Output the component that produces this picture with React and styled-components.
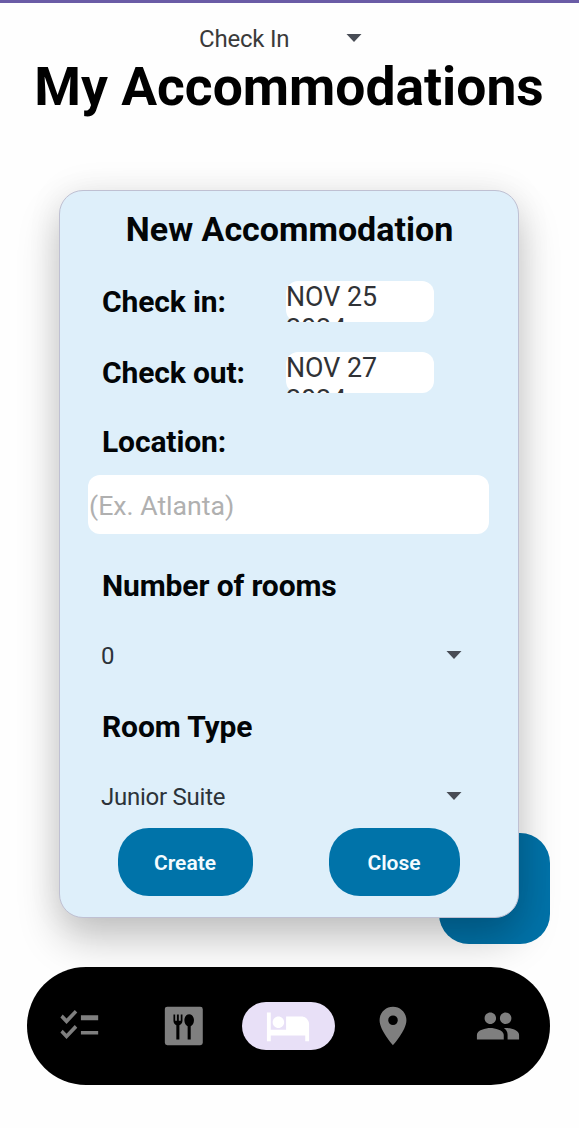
import React from "react";
import styled, { createGlobalStyle } from "styled-components";

const Global = createGlobalStyle`
  * { box-sizing: border-box; }
  body { margin: 0; background: #fefefe; font-family: Roboto, "Liberation Sans", sans-serif; }
`;

const Screen = styled.main`
  position: relative;
  display: flex;
  flex-direction: column;
  width: 579px;
  height: 1128px;
  overflow: hidden;
  border-top: 3px solid #6a5ca6;
`;

const SortSelect = styled.button`
  display: flex;
  align-items: center;
  justify-content: space-between;
  width: 163px;
  height: 28px;
  margin: 22px 0 0 199px;
  padding: 0;
  border: 0;
  background: none;
  font: 400 24px/28px Roboto, sans-serif;
  letter-spacing: -0.2px;
  color: #3a3a3a;
`;

const PageTitle = styled.h1`
  margin: 4px 0 0 -1px;
  font-size: 53.4px;
  font-weight: 700;
  line-height: 60px;
  text-align: center;
  white-space: nowrap;
  color: #000;
`;

const AddButton = styled.button`
  position: absolute;
  left: 439px;
  top: 830px;
  width: 111px;
  height: 111px;
  border: 0;
  border-radius: 30px;
  background: #0072a8;
`;

const Card = styled.section`
  position: relative;
  display: flex;
  flex-direction: column;
  width: 460px;
  height: 728px;
  margin: 73px 0 0 59px;
  padding: 0 28px;
  border: 1px solid #bfc0d2;
  border-radius: 24px;
  background: #deeffa;
  box-shadow: 0 22px 42px rgba(0, 0, 0, 0.22), 0 0 36px rgba(0, 0, 0, 0.07);
`;

const CardTitle = styled.h2`
  margin: 18px 0 0 1px;
  font-size: 34px;
  font-weight: 700;
  line-height: 40px;
  text-align: center;
  white-space: nowrap;
  color: #020507;
`;

const DateRow = styled.div`
  display: flex;
  height: 42px;
  margin-top: ${(p) => p.$gap}px;
  padding-left: 14px;
`;

const Label = styled.label`
  width: ${(p) => p.$width || "auto"};
  margin: ${(p) => p.$margin || "0"};
  font-size: 30px;
  font-weight: 700;
  line-height: 42px;
  letter-spacing: -0.12px;
  white-space: nowrap;
  color: #020507;
`;

const DateField = styled.div`
  width: 148px;
  height: 41px;
  border-radius: 12px;
  background: #fff;
`;

const DateText = styled.div`
  height: 41px;
  overflow: hidden;
  font-size: 26.8px;
  line-height: 32px;
  color: #303236;
`;

const LocationInput = styled.input`
  width: 401px;
  height: 59px;
  padding: 2px 0 0 1px;
  border: 0;
  border-radius: 12px;
  background: #fff;
  font: 400 26.7px/32px Roboto, sans-serif;
  &::placeholder { color: #b0b0b0; opacity: 1; }
`;

const Select = styled.button`
  display: flex;
  align-items: center;
  justify-content: space-between;
  width: 361px;
  height: 28px;
  margin: ${(p) => p.$gap}px 0 0 13px;
  padding: 0;
  border: 0;
  background: none;
  font: 400 24px/28px Roboto, sans-serif;
  letter-spacing: -0.25px;
  color: #2c3339;
`;

const Caret = styled.i`
  width: 16px;
  height: 8px;
  margin-bottom: 2px;
  background: #484c55;
  clip-path: polygon(3% 0, 97% 0, 50% 100%);
`;

const Actions = styled.div`
  display: flex;
  justify-content: space-between;
  width: 342px;
  margin: 17px 0 0 30px;
`;

const ActionButton = styled.button`
  width: ${(p) => p.$width}px;
  height: 68px;
  padding: 2px 1px 0 0;
  border: 0;
  border-radius: 31px;
  background: #0073a9;
  font: 600 21px/26px Roboto, sans-serif;
  color: #f4fbff;
`;

const NavBar = styled.nav`
  position: relative;
  display: grid;
  grid-template-columns: repeat(5, 1fr);
  place-items: center;
  width: 523px;
  height: 118px;
  margin: 49px 0 0 27px;
  border-radius: 59px;
  background: #000;
`;

const NavItem = styled.a`
  display: grid;
  place-items: center;
  width: 93px;
  height: 48px;
  border-radius: 25px;
  background: ${(p) => (p.$active ? "#e8e0f7" : "transparent")};
  color: ${(p) => (p.$active ? "#fff" : "#7f7f7f")};
`;

const Icon = styled.svg`
  width: 46px;
  height: 46px;
  fill: currentColor;
`;

const navItems = [
  {
    name: "Tasks",
    shape: (
      <>
        <path d="M5.500 10.900 2.300 7.500l1.200-1.500 2 2.100 4.300-4.500 1.300 1.400zM5.500 18.800 2.300 15.400l1.200-1.500 2 2.100 4.300-4.500 1.300 1.400z" />
        <path d="M13 6.400h9v2.600h-9zM13 14.600h9v1.800h-9z" />
      </>
    ),
  },
  {
    name: "Dining",
    shape: (
      <path
        fillRule="evenodd"
        d="M3.300 2h17.200A1.300 1.300 0 0 1 21.800 3.300v17.400a1.300 1.300 0 0 1-1.300 1.300H3.300A1.300 1.300 0 0 1 2 20.700V3.300A1.300 1.300 0 0 1 3.300 2zM6.500 6v3.300c0 1.200.6 2 1.500 2.300V19h1.600v-7.400c.9-.3 1.600-1.100 1.600-2.300V6h-.9v3.200h-1V6H8.300v3.200h-.9V6zM14.700 5.900c-1.500 0-2.500 1.400-2.500 3.100 0 1.500.7 2.700 1.700 3.100V19h1.600v-6.900c1-.4 1.700-1.600 1.700-3.100 0-1.700-1-3.100-2.500-3.100z"
      />
    ),
  },
  {
    name: "Stays",
    active: true,
    shape: (
      <path d="M7 13c1.660 0 3-1.340 3-3S8.660 7 7 7s-3 1.340-3 3 1.340 3 3 3zm12-6h-8v7H3V5H1v15h2v-3h18v3h2v-9c0-2.210-1.790-4-4-4z" />
    ),
  },
  {
    name: "Places",
    shape: (
      <path d="M12 2C8.130 2 5 5.130 5 9c0 5.250 7 13 7 13s7-7.750 7-13c0-3.870-3.130-7-7-7zm0 9.500a2.500 2.500 0 0 1 0-5 2.500 2.500 0 0 1 0 5z" />
    ),
  },
  {
    name: "Group",
    shape: (
      <path d="M16 11c1.660 0 2.990-1.340 2.990-3S17.660 5 16 5s-3 1.340-3 3 1.340 3 3 3zm-8 0c1.660 0 2.990-1.340 2.990-3S9.660 5 8 5 5 6.340 5 8s1.340 3 3 3zm0 2c-2.330 0-7 1.170-7 3.500V19h14v-2.500c0-2.330-4.670-3.500-7-3.500zm8 0c-.29 0-.62.02-.97.05 1.160.84 1.970 1.970 1.970 3.450V19h6v-2.500c0-2.330-4.670-3.500-7-3.500z" />
    ),
  },
];

export default function App() {
  return (
    <>
      <Global />
      <Screen>
        <SortSelect>
          Check In
          <Caret />
        </SortSelect>
        <PageTitle>My Accommodations</PageTitle>
        <AddButton aria-label="Add" />
        <Card>
          <CardTitle>New Accommodation</CardTitle>
          <DateRow $gap={32}>
            <Label $width="184px">Check in:</Label>
            <DateField>
              <DateText>NOV 25<br />2024</DateText>
            </DateField>
          </DateRow>
          <DateRow $gap={29}>
            <Label $width="184px">Check out:</Label>
            <DateField>
              <DateText>NOV 27<br />2024</DateText>
            </DateField>
          </DateRow>
          <Label $margin="27px 0 12px 14px">Location:</Label>
          <LocationInput placeholder="(Ex. Atlanta)" />
          <Label $margin="31px 0 0 14px">Number of rooms</Label>
          <Select $gap={35}>
            0
            <Caret />
          </Select>
          <Label $margin="36px 0 0 14px">Room Type</Label>
          <Select $gap={35}>
            Junior Suite
            <Caret />
          </Select>
          <Actions>
            <ActionButton $width={135}>Create</ActionButton>
            <ActionButton $width={131}>Close</ActionButton>
          </Actions>
        </Card>
        <NavBar>
          {navItems.map((item) => (
            <NavItem key={item.name} aria-label={item.name} $active={item.active}>
              <Icon viewBox="0 0 24 24">{item.shape}</Icon>
            </NavItem>
          ))}
        </NavBar>
      </Screen>
    </>
  );
}
